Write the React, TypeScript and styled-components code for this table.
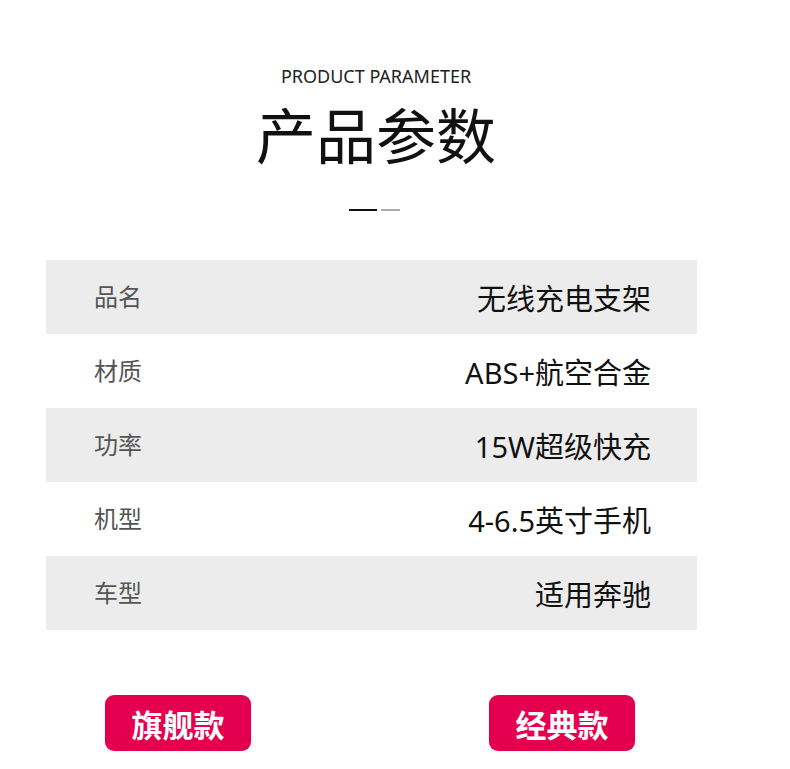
import React from "react";
import styled, { createGlobalStyle } from "styled-components";

const Global = createGlobalStyle`
  html, body { margin: 0; padding: 0; background: #ffffff; }
  body { font-family: "Noto Sans", "Noto Sans CJK SC", sans-serif; }
`;

const Page = styled.div`
  width: 790px;
  height: 769px;
  overflow: hidden;
  display: flex;
  flex-direction: column;
`;

const Header = styled.header`
  display: flex;
  flex-direction: column;
  align-items: center;
  padding-top: 64px;
  padding-right: 38px;
`;

const EnTitle = styled.div`
  font-family: "Noto Sans", sans-serif;
  font-size: 18px;
  line-height: 24px;
  color: #222;
  letter-spacing: 0;
`;

const CnTitle = styled.h1`
  margin: 1px 0 0;
  font-family: "Noto Sans CJK SC", sans-serif;
  font-weight: 400;
  font-size: 60px;
  line-height: 87px;
  color: #111;
`;

const Divider = styled.div`
  display: flex;
  gap: 4px;
  margin-top: 33px;
  margin-left: -3px;
`;

const Dash = styled.span<{ $w: number; $c: string }>`
  display: block;
  width: ${(p) => p.$w}px;
  height: 2px;
  background: ${(p) => p.$c};
`;

const Table = styled.div`
  margin: 49px 0 0 46px;
  width: 651px;
  display: flex;
  flex-direction: column;
`;

const Row = styled.div<{ $shaded: boolean }>`
  height: 74px;
  display: flex;
  align-items: center;
  justify-content: space-between;
  padding: 0 46px 0 48px;
  background: ${(p) => (p.$shaded ? "#ececec" : "#ffffff")};
`;

const Label = styled.span`
  font-family: "Noto Sans CJK SC", sans-serif;
  font-size: 24px;
  color: #555;
  margin-top: -3px;
`;

const Value = styled.span`
  font-family: "Noto Sans", "Noto Sans CJK SC", sans-serif;
  font-size: 29px;
  color: #111;
`;

const Buttons = styled.div`
  margin: 65px 0 0 46px;
  width: 651px;
  display: flex;
  justify-content: space-between;
  padding: 0 62px 0 59px;
  box-sizing: border-box;
`;

const Tag = styled.div`
  width: 146px;
  height: 56px;
  border-radius: 9px;
  background: #e5004f;
  color: #fff;
  display: flex;
  align-items: center;
  justify-content: center;
  font-family: "Noto Sans CJK SC", sans-serif;
  font-weight: 700;
  font-size: 31px;
`;

const rows: [string, string][] = [
  ["品名", "无线充电支架"],
  ["材质", "ABS+航空合金"],
  ["功率", "15W超级快充"],
  ["机型", "4-6.5英寸手机"],
  ["车型", "适用奔驰"],
];

export default function App() {
  return (
    <Page>
      <Global />
      <Header>
        <EnTitle>PRODUCT PARAMETER</EnTitle>
        <CnTitle>产品参数</CnTitle>
        <Divider>
          <Dash $w={28} $c="#111" />
          <Dash $w={19} $c="#aaa" />
        </Divider>
      </Header>
      <Table>
        {rows.map(([k, v], i) => (
          <Row key={k} $shaded={i % 2 === 0}>
            <Label>{k}</Label>
            <Value>{v}</Value>
          </Row>
        ))}
      </Table>
      <Buttons>
        <Tag>旗舰款</Tag>
        <Tag>经典款</Tag>
      </Buttons>
    </Page>
  );
}
